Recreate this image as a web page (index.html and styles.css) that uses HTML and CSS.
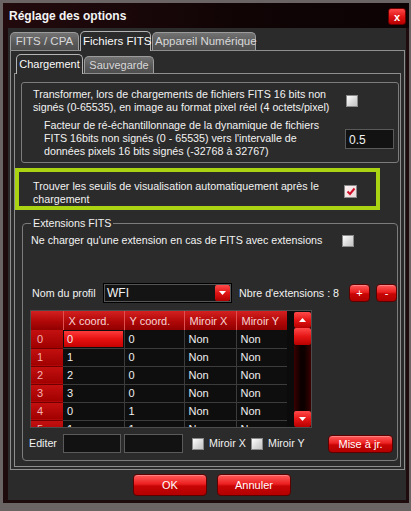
FILE: index.html
```html
<!DOCTYPE html>
<html lang="fr">
<head>
<meta charset="utf-8">
<title>Réglage des options</title>
<link rel="stylesheet" href="styles.css">
</head>
<body>
<div class="window">
  <div class="titlebar">
    <span class="title">Réglage des options</span>
    <button class="close">x</button>
  </div>
  <div class="content">
    <div class="tabs outer-tabs">
      <div class="tab t-fits">FITS / CPA</div>
      <div class="tab active t-fich">Fichiers FITS</div>
      <div class="tab t-app">Appareil Numérique</div>
    </div>
    <div class="panel outer-panel">
      <div class="tabs inner-tabs">
        <div class="tab active t-charg">Chargement</div>
        <div class="tab t-sauv">Sauvegarde</div>
      </div>
      <div class="panel inner-panel">
        <div class="group g1">
          <div class="row r1">
            <p class="label">Transformer, lors de chargements de fichiers FITS 16 bits non<br>signés (0-65535), en image au format pixel réel (4 octets/pixel)</p>
            <span class="check c1"></span>
          </div>
          <div class="row r2">
            <p class="label">Facteur de ré-échantillonnage de la dynamique de fichiers<br>FITS 16bits non signés (0 - 65535) vers l'intervalle de<br>données pixels 16 bits signés (-32768 à 32767)</p>
            <div class="field f-factor">0.5</div>
          </div>
        </div>
        <div class="highlight">
          <p class="label">Trouver les seuils de visualisation automatiquement après le<br>chargement</p>
          <span class="check checked c2"><svg width="10" height="9" viewBox="0 0 10 9"><path d="M1.5 4.5 L4 7 L8.5 1.5" fill="none" stroke="#d0102a" stroke-width="2"/></svg></span>
        </div>
        <fieldset class="group ext">
          <legend>Extensions FITS</legend>
          <div class="row r-one">
            <p class="label">Ne charger qu'une extension en cas de FITS avec extensions</p>
            <span class="check c3"></span>
          </div>
          <div class="row r-profile">
            <span class="label nom">Nom du profil</span>
            <div class="combo"><span>WFI</span><span class="combo-btn"><svg width="7" height="4" viewBox="0 0 7 4"><path d="M0 0 H7 L3.5 4 Z" fill="#fff"/></svg></span></div>
            <span class="label nbre">Nbre d'extensions : 8</span>
            <button class="btn small">+</button>
            <button class="btn small">-</button>
          </div>
          <div class="grid">
            <div class="grid-body">
              <table>
                <colgroup><col class="w-h"><col class="w-x"><col class="w-y"><col class="w-mx"><col class="w-my"></colgroup>
                <thead>
                  <tr><th></th><th>X coord.</th><th>Y coord.</th><th>Miroir X</th><th>Miroir Y</th></tr>
                </thead>
                <tbody>
                  <tr><th>0</th><td class="sel">0</td><td>0</td><td>Non</td><td>Non</td></tr>
                  <tr><th>1</th><td>1</td><td>0</td><td>Non</td><td>Non</td></tr>
                  <tr><th>2</th><td>2</td><td>0</td><td>Non</td><td>Non</td></tr>
                  <tr><th>3</th><td>3</td><td>0</td><td>Non</td><td>Non</td></tr>
                  <tr><th>4</th><td>0</td><td>1</td><td>Non</td><td>Non</td></tr>
                  <tr><th>5</th><td>1</td><td>1</td><td>Non</td><td>Non</td></tr>
                </tbody>
              </table>
            </div>
            <div class="scrollbar">
              <div class="sb-btn"><svg width="7" height="4" viewBox="0 0 7 4"><path d="M0 4 H7 L3.5 0 Z" fill="#fff"/></svg></div>
              <div class="sb-thumb"></div>
              <div class="sb-track"></div>
              <div class="sb-btn"><svg width="7" height="4" viewBox="0 0 7 4"><path d="M0 0 H7 L3.5 4 Z" fill="#fff"/></svg></div>
            </div>
          </div>
          <div class="row r-edit">
            <span class="label editer">Editer</span>
            <div class="field f-edit1"></div>
            <div class="field f-edit2"></div>
            <span class="check c4"></span>
            <span class="label mx">Miroir X</span>
            <span class="check c5"></span>
            <span class="label my">Miroir Y</span>
            <button class="btn maj">Mise à jr.</button>
          </div>
        </fieldset>
      </div>
    </div>
    <div class="footer">
      <button class="btn big">OK</button>
      <button class="btn big">Annuler</button>
    </div>
  </div>
</div>
</body>
</html>
```

FILE: styles.css
```css
* { box-sizing: border-box; }
html, body { margin: 0; padding: 0; }
body {
  width: 411px;
  height: 511px;
  overflow: hidden;
  background: #6a6464;
  font-family: "Liberation Sans", Arial, sans-serif;
  font-size: 10.7px;
  color: #f2f2f2;
}
p { margin: 0; }

.window {
  margin: 3px 0 0 3px;
  width: 406px;
  height: 500px;
  background: #1e0b0d;
  display: flex;
  flex-direction: column;
}
.titlebar {
  height: 25px;
  flex: none;
  display: flex;
  align-items: center;
  justify-content: space-between;
  padding: 0 3px 0 6px;
  background: linear-gradient(to right, #220a0d, #100405 60%, #0c0304);
}
.title {
  font-weight: bold;
  font-size: 12px;
  color: #f4f4f4;
}
.close {
  width: 18px;
  height: 17px;
  margin-top: 2px;
  padding: 0;
  border: 1px solid #6a0000;
  border-radius: 3px;
  background: linear-gradient(#ff4a4a, #e01515 50%, #b80000);
  color: #fff;
  font-family: "Liberation Sans", Arial, sans-serif;
  font-size: 11px;
  font-weight: bold;
  line-height: 14px;
}

.content {
  flex: 1;
  margin: 0 3px 3px 5px;
  background: #2b2b2b;
  display: flex;
  flex-direction: column;
}

/* tabs */
.tabs {
  display: flex;
  align-items: flex-end;
  gap: 1px;
  position: relative;
  z-index: 1;
}
.outer-tabs { padding: 2px 0 0 2px; height: 22px; }
.inner-tabs { padding: 0 0 0 2px; height: 19px; }
.tab {
  flex: none;
  height: 18px;
  padding: 0 2px;
  border: 1px solid #9c9c9c;
  border-bottom: none;
  border-radius: 5px 5px 0 0;
  background: linear-gradient(#727272, #585858 60%, #4e4e4e);
  color: #d8d8d8;
  font-size: 11.5px;
  line-height: 17px;
  text-align: center;
  white-space: nowrap;
}
.tab.active {
  height: 20px;
  margin-bottom: -1px;
  background: #2b2b2b;
  color: #fafafa;
  border-color: #b4b4b4;
  line-height: 18px;
}
.inner-tabs .tab { height: 17px; line-height: 16px; font-size: 11px; }
.inner-tabs .tab.active { height: 20px; line-height: 19px; }
.t-fits { width: 69px; }
.t-fich { width: 71px; }
.t-app { width: 104px; }
.t-charg { width: 67px; }
.t-sauv { width: 70px; }

.panel {
  border: 1px solid #8e8e8e;
}
.outer-panel {
  margin-left: 2px;
  width: 395px;
  height: 420px;
  padding: 3px 3px 2px 3px;
  display: flex;
  flex-direction: column;
}
.inner-panel {
  flex: 1;
  padding: 0;
}

/* groups */
.group {
  border: 1px solid #7c7c7c;
}
.g1 {
  margin: 8px 1px 0 6px;
  height: 81px;
  padding: 5px 0 0 0;
  border-radius: 3px;
}
.row {
  display: flex;
  align-items: center;
}
.row > * { flex-shrink: 0; }
.label { line-height: 13px; white-space: nowrap; }
.r1 { padding-left: 11px; }
.r1 .label { flex: 1; }
.c1 { margin-right: 40px; }
.r2 { padding-left: 22px; margin-top: 5px; }
.r2 .label { flex: 1; }
.f-factor { margin-right: 4px; width: 49px; height: 20px; padding: 3px 0 0 3px; font-size: 12px; }

.check {
  display: inline-flex;
  align-items: center;
  justify-content: center;
  width: 12px;
  height: 12px;
  flex: none;
  border: 1px solid #8a8a8a;
  background: linear-gradient(135deg, #ffffff, #d8d8d8 60%, #c4c4c4);
}
.check.checked {
  width: 13px;
  height: 13px;
  background: linear-gradient(135deg, #fff4f4, #ecd8d8);
}

.field {
  flex: none;
  background: #121212;
  border: 1px solid #5a5a5a;
  color: #f2f2f2;
}

.highlight {
  margin-top: 5px;
  width: 365px;
  height: 42px;
  border: 4px solid #aad411;
  display: flex;
  align-items: flex-start;
  padding: 8px 0 0 14px;
}
.highlight .label { flex: 1; }
.c2 { margin: 5px 19px 0 0; }

/* extensions fieldset */
.ext {
  margin: 7px 2px 0 7px;
  padding: 0 0 7px 8px;
  min-width: 0;
  border-radius: 4px;
}
.ext legend {
  padding: 0 2px;
  line-height: 13px;
  font-size: 10.7px;
  color: #f2f2f2;
}
.r-one { margin-top: 4px; }
.r-one .label { flex: 1; }
.c3 { margin-right: 43px; }

.r-profile {
  margin-top: 36px;
  height: 20px;
}
.nom { margin-left: 1px; width: 71px; }
.combo {
  width: 129px;
  height: 20px;
  background: #141414;
  border: 1px solid #000;
  box-shadow: inset 0 0 0 1px #555;
  display: flex;
  align-items: center;
  justify-content: space-between;
  padding: 0 1px 0 3px;
  font-size: 12px;
}
.combo-btn {
  width: 15px;
  height: 16px;
  border-radius: 2px;
  background: linear-gradient(#ff4a4a, #e01515 50%, #b00000);
  display: flex;
  align-items: center;
  justify-content: center;
}
.nbre { margin-left: 7px; width: 100px; }

.btn {
  flex: none;
  padding: 0;
  border: 1px solid #5c0000;
  border-radius: 4px;
  background: linear-gradient(#ff5a5a, #ec2020 45%, #c80505 55%, #b30000);
  box-shadow: inset 0 1px 0 rgba(255,255,255,0.25);
  color: #fff;
  font-family: "Liberation Sans", Arial, sans-serif;
  font-size: 11px;
}
.btn.small {
  width: 21px;
  height: 18px;
  line-height: 14px;
  margin-left: 10px;
}
.btn.small + .btn.small { margin-left: 6px; }

/* grid */
.grid {
  margin: 7px 0 0 -1px;
  width: 282px;
  height: 118px;
  border: 1px solid #4c4c4c;
  background: #0b0b0b;
  display: flex;
  overflow: hidden;
}
.grid-body { width: 256px; flex: none; overflow: hidden; }
table {
  width: 256px;
  table-layout: fixed;
  border-collapse: collapse;
  font-size: 11px;
}
.w-h { width: 32px; }
.w-x { width: 61px; }
.w-y { width: 60px; }
.w-mx { width: 52px; }
.w-my { width: 51px; }
thead th {
  height: 19px;
  padding: 0 0 0 5px;
  text-align: left;
  font-weight: normal;
  color: #f6d4d4;
  background: linear-gradient(#d42020, #b00808 55%, #900000);
  border-left: 1px solid #e05050;
}
thead th:first-child { border-left: none; }
tbody th {
  height: 18px;
  padding: 0 0 0 6px;
  text-align: left;
  font-weight: normal;
  color: #f4b4b4;
  background: linear-gradient(#c41010, #a00000);
  border-bottom: 1px solid #700000;
}
td {
  height: 18px;
  padding: 0 0 0 4px;
  background: #0e0e0e;
  border-right: 1px solid #3c3c3c;
  border-bottom: 1px solid #3c3c3c;
  color: #f0f0f0;
}
td.sel {
  background: linear-gradient(#ff4040, #e61010 50%, #c00000);
  box-shadow: inset 0 0 0 1px #0e0e0e;
}
.scrollbar {
  margin: 1px 0 0 7px;
  width: 17px;
  height: 115px;
  display: flex;
  flex-direction: column;
}
.sb-btn, .sb-thumb {
  height: 16px;
  flex: none;
  border-radius: 2px;
  background: linear-gradient(#ff4a4a, #e51515 50%, #b80000);
  display: flex;
  align-items: center;
  justify-content: center;
}
.sb-thumb { height: 17px; }
.sb-track {
  flex: 1;
  background: linear-gradient(to right, #3a0000, #0c0000 40%, #0c0000 60%, #3a0000);
}

.r-edit {
  margin-top: 6px;
  height: 19px;
}
.editer { margin-left: -2px; width: 34px; }
.f-edit1 { width: 58px; height: 19px; }
.f-edit2 { margin-left: 3px; width: 59px; height: 19px; }
.c4 { margin-left: 9px; }
.mx { margin-left: 5px; width: 38px; }
.c5 { margin-left: 4px; }
.my { margin-left: 5px; width: 37px; }
.btn.maj {
  margin-left: 23px;
  width: 65px;
  height: 18px;
}

/* footer */
.footer {
  margin-top: 4px;
  padding-left: 10px;
  display: flex;
  justify-content: center;
  gap: 10px;
}
.btn.big {
  width: 74px;
  height: 22px;
}
```
